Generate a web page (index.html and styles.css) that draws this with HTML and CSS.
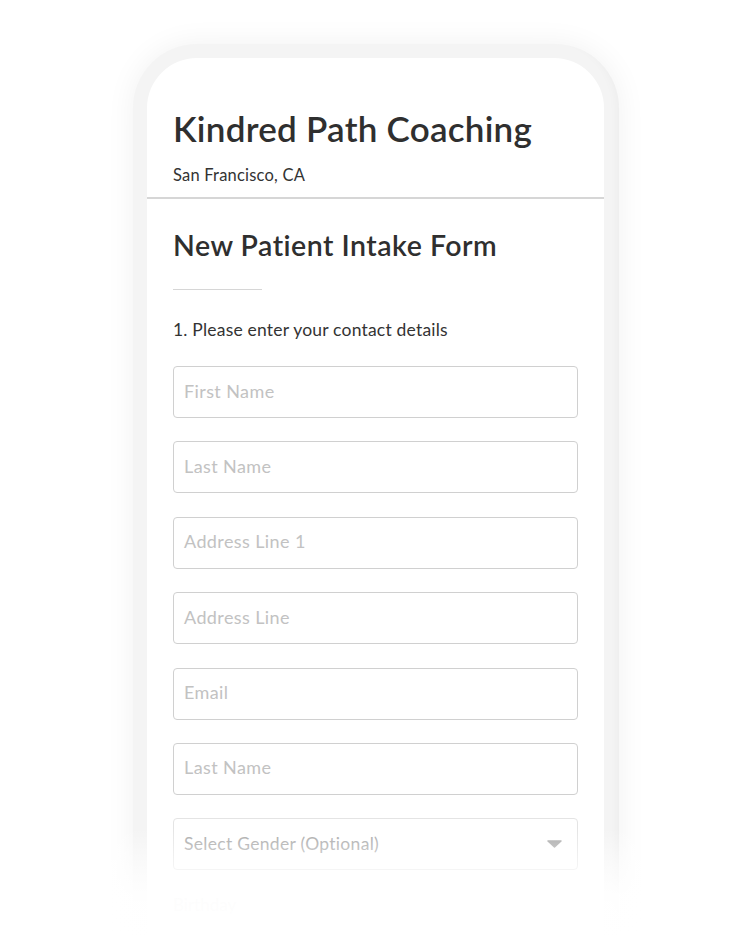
FILE: index.html
```html
<!DOCTYPE html>
<html lang="en">
<head>
<meta charset="utf-8">
<title>Kindred Path Coaching</title>
<link rel="stylesheet" href="styles.css">
</head>
<body>
<div class="stage">
  <div class="phone">
    <div class="screen">
      <header class="biz">
        <h1 class="biz-name">Kindred Path Coaching</h1>
        <p class="biz-loc">San Francisco, CA</p>
      </header>
      <main class="form">
        <h2 class="form-title">New Patient Intake Form</h2>
        <div class="rule"></div>
        <p class="question">1. Please enter your contact details</p>
        <div class="fields">
          <div class="field">First Name</div>
          <div class="field">Last Name</div>
          <div class="field">Address Line 1</div>
          <div class="field">Address Line</div>
          <div class="field">Email</div>
          <div class="field">Last Name</div>
          <div class="field select">
            <span>Select Gender (Optional)</span>
            <svg class="caret" width="15" height="8" viewBox="0 0 15 8"><path d="M1 1 H14 L7.5 7 Z" fill="#a9a9a9" stroke="#a9a9a9" stroke-width="1.5" stroke-linejoin="round"/></svg>
          </div>
        </div>
        <p class="label">Birthday</p>
      </main>
    </div>
  </div>
  <div class="fade"></div>
</div>
</body>
</html>
```

FILE: styles.css
```css
html, body {
  margin: 0;
  padding: 0;
  background: #ffffff;
}
body {
  width: 750px;
  height: 938px;
  overflow: hidden;
  font-family: "Lato", "Noto Sans", sans-serif;
  color: #2e2e2e;
}
.stage {
  position: relative;
  width: 750px;
  height: 938px;
  overflow: hidden;
  padding-top: 44px;
  box-sizing: border-box;
}
.phone {
  margin-left: 133px;
  width: 486px;
  height: 1000px;
  box-sizing: border-box;
  padding: 14px 15px 0 14px;
  background: #f4f4f4;
  border-radius: 64px 64px 0 0;
  box-shadow: 0 0 30px rgba(0, 0, 0, 0.06), inset -10px 0 10px -8px rgba(0,0,0,0.03);
}
.screen {
  background: #ffffff;
  height: 100%;
  border-radius: 50px 50px 0 0;
  overflow: hidden;
}
.biz {
  padding: 50px 26px 0 26px;
  height: 141px;
  box-sizing: border-box;
  border-bottom: 2px solid #d6d6d6;
}
.biz-name {
  margin: 0;
  font-size: 35px;
  line-height: 40px;
  font-weight: 600;
  color: #2f2f2f;
  letter-spacing: 0.25px;
}
.biz-loc {
  margin: 17px 0 0 0;
  font-size: 16.5px;
  line-height: 20px;
  color: #333;
  letter-spacing: 0.2px;
}
.form {
  padding: 0 26px;
}
.form-title {
  margin: 29px 0 0 0;
  font-size: 28.5px;
  line-height: 34px;
  font-weight: 600;
  color: #2f2f2f;
  letter-spacing: 0.5px;
}
.rule {
  width: 89px;
  height: 1px;
  background: #d6d6d6;
  margin-top: 27px;
}
.question {
  margin: 28px 0 0 0;
  font-size: 17.5px;
  line-height: 24px;
  color: #333;
  letter-spacing: 0.2px;
}
.fields {
  margin-top: 24px;
  display: flex;
  flex-direction: column;
  gap: 23.4px;
}
.field {
  height: 52px;
  box-sizing: border-box;
  border: 1.5px solid #d0d0d0;
  border-radius: 4px;
  padding: 0 10px 3px 10px;
  display: flex;
  align-items: center;
  font-size: 18px;
  letter-spacing: 0.4px;
  color: #c2c2c2;
}
.field.select {
  border-color: #e4e4e4;
  color: #a8a8a8;
  justify-content: space-between;
  padding: 0 15px 1px 10px;
  font-size: 17.5px;
  letter-spacing: 0.3px;
}
.caret {
  display: block;
}
.label {
  margin: 24px 0 0 0;
  font-size: 17px;
  color: #cfcfcf;
}
.fade {
  position: absolute;
  left: 0;
  right: 0;
  bottom: 0;
  height: 110px;
  background: linear-gradient(to bottom, rgba(255,255,255,0) 0%, rgba(255,255,255,0.6) 35%, rgba(255,255,255,0.95) 62%, #ffffff 100%);
}
```
